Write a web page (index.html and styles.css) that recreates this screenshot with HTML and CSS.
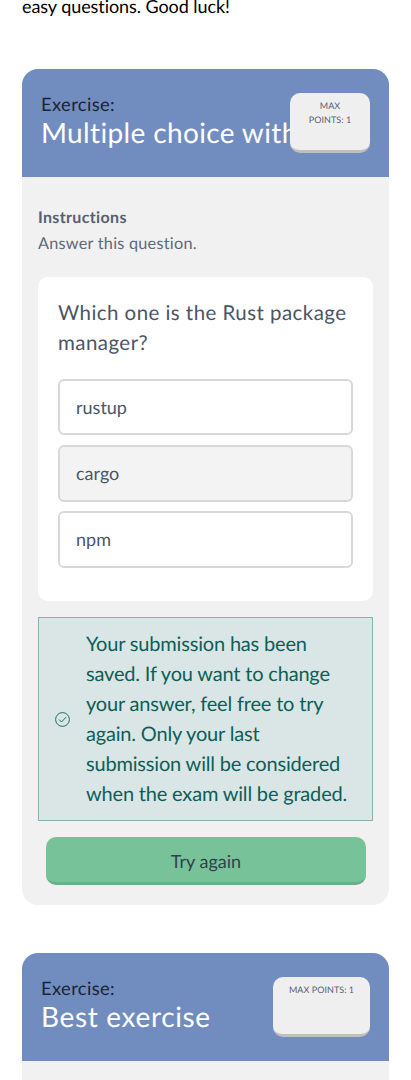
FILE: index.html
```html
<!DOCTYPE html>
<html lang="en">
<head>
<meta charset="utf-8">
<meta name="viewport" content="width=device-width, initial-scale=1">
<title>Exam</title>
<link rel="stylesheet" href="styles.css">
</head>
<body>
<main class="page">
  <p class="intro">easy questions. Good luck!</p>
  <section class="exercise">
    <header class="exercise-header">
      <h2 class="heading"><span class="label">Exercise:</span><span class="title title-long">Multiple choice with</span></h2>
      <div class="points points-narrow">MAX<br>POINTS: 1</div>
    </header>
    <div class="exercise-body">
      <h3 class="instructions-title">Instructions</h3>
      <p class="instructions">Answer this question.</p>
      <div class="quiz">
        <p class="question">Which one is the Rust package<br>manager?</p>
        <div class="options">
          <button class="option">rustup</button>
          <button class="option selected">cargo</button>
          <button class="option">npm</button>
        </div>
      </div>
      <div class="notice">
        <svg class="check" viewBox="0 0 15 15" fill="none" stroke="currentColor"><circle cx="7.5" cy="7.5" r="6.9" stroke-width=".9"/><path d="M4.1 7.6 6.5 10 11 5.2" stroke-width=".9"/></svg>
        <p class="notice-text">Your submission has been<br>saved. If you want to change<br>your answer, feel free to try<br>again. Only your last<br>submission will be considered<br>when the exam will be graded.</p>
      </div>
      <button class="retry">Try again</button>
    </div>
  </section>
  <section class="exercise">
    <header class="exercise-header">
      <h2 class="heading"><span class="label">Exercise:</span><span class="title">Best exercise</span></h2>
      <div class="points">MAX POINTS: 1</div>
    </header>
    <div class="exercise-body"></div>
  </section>
</main>
</body>
</html>
```
FILE: styles.css
```css
* { box-sizing: border-box; }
body, h2, h3, p { margin: 0; font-weight: 400; }
body { background: #fff; font-family: Lato, sans-serif; text-rendering: geometricPrecision; }
.page { height: 1080px; overflow: hidden; padding: 0 22px; }
.intro { height: 13px; font-size: 18px; line-height: 12px; letter-spacing: -.07px; font-variant-ligatures: none; color: #000; white-space: nowrap; }
.exercise { margin-bottom: 48px; border-radius: 16px; background: #f1f1f1; overflow: hidden; }
.intro + .exercise { margin-top: 56px; }
.exercise-header { display: flex; height: 108px; padding: 23px 19px 24px; background: #718dbf; }
.heading { flex: 1; min-width: 0; white-space: nowrap; }
.label, .title { display: block; }
.label { height: 24px; font-size: 18.4px; line-height: 24px; letter-spacing: .35px; color: #1a2333; }
.title { font-size: 28px; line-height: 32px; letter-spacing: .65px; color: #fff; }
.title-long { letter-spacing: .36px; }
.points { position: relative; width: 97px; height: 60px; margin-top: 1px; padding-top: 6px; border-bottom: 3px solid #bfbfbf; border-radius: 10px; background: #efefef; color: #57606f; font-size: 9px; line-height: 14px; letter-spacing: .05px; text-align: center; white-space: nowrap; }
.points-narrow { width: 80px; }
.exercise-body { padding: 28px 16px 20px; min-height: 100px; }
.instructions-title { font-size: 16px; font-weight: 700; line-height: 26px; letter-spacing: .35px; color: #566070; }
.instructions { font-size: 16.3px; line-height: 26px; letter-spacing: .23px; color: #5e6979; }
.quiz { height: 324px; margin-top: 20px; padding: 21px 20px 20px; border-radius: 10px; background: #fff; }
.question { font-size: 20.5px; line-height: 30px; letter-spacing: .44px; color: #4b5566; white-space: nowrap; }
.options { display: grid; gap: 9px; margin-top: 21px; }
.option { height: 57px; padding: 0 16px 1px; border: 2px solid #d7d8d8; border-radius: 6px; background: #fff; color: #4b5566; font: 18px/28px Lato, sans-serif; text-align: left; text-rendering: inherit; }
.option:first-child { height: 56px; margin-bottom: 1px; padding-bottom: 0; }
.selected { background: #f3f3f3; }
.notice { display: flex; align-items: center; height: 204px; margin-top: 16px; padding: 0 16px; border: 1px solid #8bb3ae; background: #dae6e5; color: #0c5f57; }
.check { flex: none; width: 15px; height: 15px; margin-right: 16px; }
.notice-text { font-size: 20px; line-height: 30px; letter-spacing: -.18px; white-space: nowrap; }
.retry { display: block; width: 320px; height: 48px; margin: 16px 7px 0 8px; padding: 2px 0 0; border: 0; border-bottom: 3px solid #69af8a; border-radius: 10px; background: #77c299; color: #32404d; font: 18px/28px Lato, sans-serif; text-rendering: inherit; }
```
